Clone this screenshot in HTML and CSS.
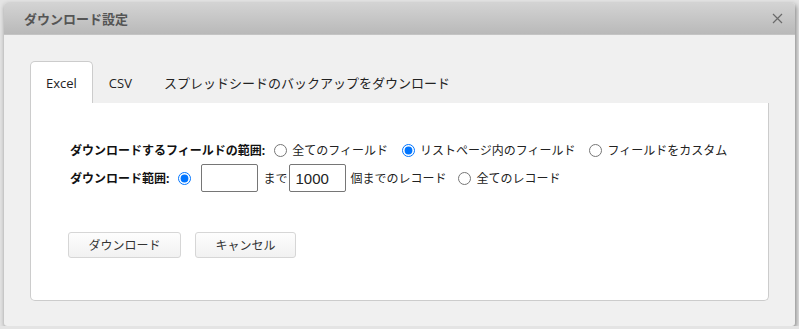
FILE: index.html
```html
<!DOCTYPE html>
<html lang="ja">

<head>
    <meta charset="UTF-8">
    <meta name="viewport" content="width=device-width, initial-scale=1.0">
    <title>ダウンロード設定</title>
    <link rel="stylesheet" href="styles.css">
</head>

<body>
    <div class="dialog">
        <div class="dialog-title">
            <span>ダウンロード設定</span>
            <button class="close" title="閉じる">
                <svg width="11" height="11" viewBox="0 0 11 11">
                    <path d="M1 1 L10 10 M10 1 L1 10" stroke="#6a6a6a" stroke-width="1.2" fill="none" />
                </svg>
            </button>
        </div>

        <div class="dialog-body">
            <ul class="tabs">
                <li class="tab active">Excel</li>
                <li class="tab">CSV</li>
                <li class="tab">スプレッドシードのバックアップをダウンロード</li>
            </ul>

            <div class="panel">
                <div class="row">
                    <span class="field-label">ダウンロードするフィールドの範囲:</span>
                    <label class="opt"><input type="radio" name="fields">全てのフィールド</label>
                    <label class="opt"><input type="radio" name="fields" checked>リストページ内のフィールド</label>
                    <label class="opt"><input type="radio" name="fields">フィールドをカスタム</label>
                </div>
                <div class="row">
                    <span class="field-label">ダウンロード範囲:</span>
                    <label class="opt bare"><input type="radio" name="range" checked></label>
                    <input class="num" type="text" value="">
                    <span class="word">まで</span>
                    <input class="num" type="text" value="1000">
                    <span class="word tail">個までのレコード</span>
                    <label class="opt"><input type="radio" name="range">全てのレコード</label>
                </div>

                <div class="actions">
                    <button class="btn">ダウンロード</button>
                    <button class="btn">キャンセル</button>
                </div>
            </div>
        </div>
    </div>
</body>

</html>
```

FILE: styles.css
```css
body {
    margin: 0;
    padding: 3px 4px 0;
    background-color: #e4e4e4;
    font-family: "Open Sans", "Noto Sans CJK JP", sans-serif;
    color: #333;
}

.dialog {
    width: 791px;
    height: 323px;
    background-color: #f0f0f0;
    border-radius: 3px;
    box-shadow: 1px 2px 5px rgba(0, 0, 0, 0.45);
    overflow: hidden;
    display: flex;
    flex-direction: column;
}

.dialog-title {
    height: 31px;
    display: flex;
    align-items: center;
    justify-content: space-between;
    padding: 0 12px 0 20px;
    background: linear-gradient(#d3d3d3, #b9b9b9);
    border-bottom: 1px solid #c4c4c4;
    font-size: 13px;
    font-weight: bold;
    color: #555;
}

.close {
    border: none;
    background: none;
    padding: 0;
    width: 11px;
    height: 11px;
    cursor: pointer;
    display: flex;
}

.dialog-body {
    padding: 26px 26px 0;
}

.tabs {
    list-style: none;
    margin: 0;
    padding: 0;
    display: flex;
    height: 42px;
}

.tab {
    padding: 0 15px;
    line-height: 42px;
    font-size: 13px;
    color: #222;
    border: 1px solid transparent;
    border-bottom: none;
    border-radius: 5px 5px 0 0;
}

.tab.active {
    background-color: #fff;
    border-color: #ccc;
    position: relative;
    z-index: 1;
}

.panel {
    height: 198px;
    box-sizing: border-box;
    background-color: #fff;
    border: 1px solid #ccc;
    border-top: none;
    border-radius: 0 0 5px 5px;
    padding: 38px 39px 0;
}

.row {
    display: flex;
    align-items: center;
    font-size: 12px;
    color: #222;
    white-space: nowrap;
}

.row > * {
    flex-shrink: 0;
}

.row+.row {
    margin-top: 5px;
}

.field-label {
    font-weight: bold;
    color: #111;
    margin-right: 4px;
}

.opt {
    display: flex;
    align-items: center;
    margin-left: 5px;
    margin-right: 9px;
}

.opt input {
    margin: 0 5px 0 0;
    width: 13px;
    height: 13px;
}

.opt.bare {
    margin-right: 10px;
}

.opt.bare input {
    margin: 0;
}

.num {
    width: 57px;
    height: 28px;
    box-sizing: border-box;
    border: 1px solid #767676;
    border-radius: 2px;
    padding: 0 5px;
    font-family: "Liberation Sans", sans-serif;
    font-size: 15px;
    color: #222;
}

.word {
    margin: 0 2px 0 5px;
}

.word.tail {
    margin: 0 7px 0 4px;
}

.actions {
    display: flex;
    gap: 14px;
    margin: 40px 0 0 -2px;
}

.btn {
    height: 26px;
    padding: 0;
    white-space: nowrap;
    font-family: "Open Sans", "Noto Sans CJK JP", sans-serif;
    font-size: 12px;
    color: #333;
    background: linear-gradient(#fdfdfd, #f1f1f1);
    border: 1px solid #d6d6d6;
    border-radius: 3px;
    cursor: pointer;
}

.btn:first-child {
    width: 113px;
}

.btn:last-child {
    width: 101px;
}
```
